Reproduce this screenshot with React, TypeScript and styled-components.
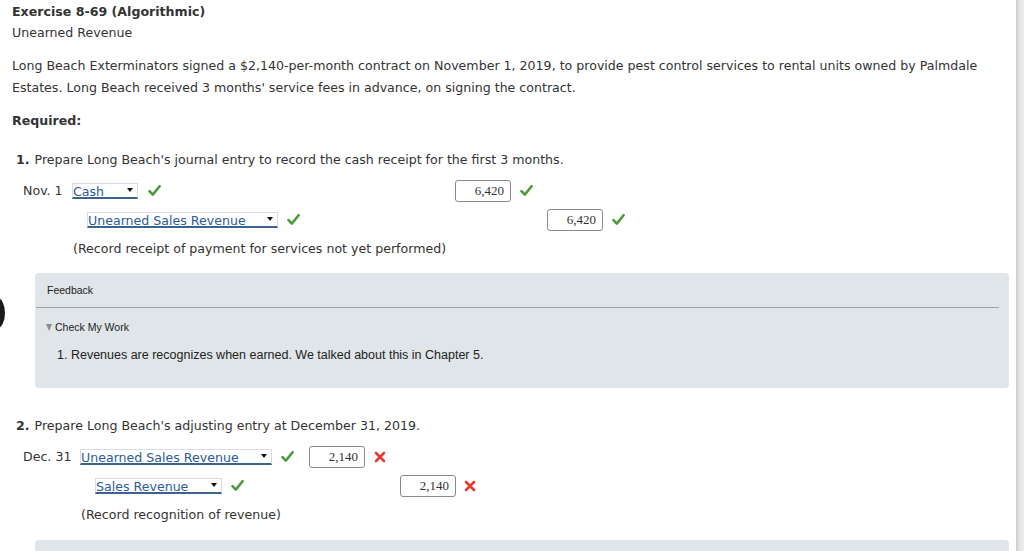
import React from "react";
import styled, { createGlobalStyle } from "styled-components";

const GlobalStyle = createGlobalStyle`
  html, body {
    margin: 0;
    padding: 0;
    background: #fff;
  }
  body {
    font-family: "DejaVu Sans", Verdana, sans-serif;
    color: #333;
    overflow: hidden;
  }
`;

const Page = styled.div`
  display: flex;
  width: 1024px;
  height: 551px;
  overflow: hidden;
  position: relative;
`;

const Main = styled.div`
  flex: 1;
  padding: 4px 0 0 12px;
  font-size: 12.6px;
`;

const Scroll = styled.div`
  width: 8px;
  background: linear-gradient(90deg, #c9c9c9 0%, #e4e4e4 40%, #ececec 100%);
`;

const Blob = styled.div`
  position: absolute;
  left: -10px;
  top: 298px;
  width: 15px;
  height: 30px;
  border-radius: 50%;
  background: #1a1a1a;
`;

const Title = styled.div`
  font-weight: bold;
  line-height: 16px;
  height: 16px;
`;

const Sub = styled.div`
  margin-top: 5px;
  line-height: 16px;
`;

const Para = styled.p`
  margin: 14px 0 0;
  line-height: 22px;
  padding-right: 30px;
`;

const Required = styled.div`
  margin-top: 14px;
  font-weight: bold;
  line-height: 16px;
`;

const Question = styled.div`
  margin-top: 23px;
  padding-left: 4px;
  line-height: 16px;
  b {
    margin-right: 5px;
  }
`;

const Entry = styled.div<{ indent: number }>`
  display: flex;
  align-items: center;
  height: 29px;
  padding-left: ${(p) => p.indent}px;
`;

const DateLabel = styled.span<{ w: number }>`
  width: ${(p) => p.w}px;
  flex-shrink: 0;
`;

const Select = styled.span<{ w: number }>`
  position: relative;
  display: inline-block;
  width: ${(p) => p.w}px;
  height: 16px;
  line-height: 15px;
  color: #2b5d98;
  border: 1px solid #d6dde6;
  border-bottom: 2px solid #3a6390;
  box-sizing: border-box;
  padding-left: 0;
  flex-shrink: 0;
  &::after {
    content: "";
    position: absolute;
    right: 4px;
    top: 4px;
    border-left: 3.5px solid transparent;
    border-right: 3.5px solid transparent;
    border-top: 4px solid #111;
  }
`;

const Mark = styled.span<{ gap: number }>`
  margin-left: ${(p) => p.gap}px;
  display: inline-flex;
  width: 13px;
  flex-shrink: 0;
`;

const Amount = styled.span<{ x: number }>`
  margin-left: ${(p) => p.x}px;
  width: 56px;
  height: 22px;
  box-sizing: border-box;
  border: 1px solid #8a8a8a;
  border-radius: 3px;
  font-family: "Liberation Serif", "Times New Roman", serif;
  font-size: 13px;
  text-align: right;
  padding-right: 6px;
  line-height: 20px;
  color: #333;
  flex-shrink: 0;
`;

const Note = styled.div<{ indent: number }>`
  padding-left: ${(p) => p.indent}px;
  line-height: 16px;
  margin-top: 7px;
`;

const Feedback = styled.div`
  margin: 16px 7px 0 23px;
  background: #dfe5e8;
  border-radius: 4px;
  height: 115px;
  padding: 0 10px 0 0;
  font-family: "Liberation Sans", Arial, sans-serif;
  color: #222;
`;

const FeedbackHead = styled.div`
  font-size: 10.5px;
  padding: 11px 0 0 11px;
  height: 23px;
  border-bottom: 1px solid #9aa0a4;
  margin-left: 1px;
`;

const CheckWork = styled.div`
  font-size: 10.5px;
  padding: 13px 0 0 11px;
  display: flex;
  align-items: center;
  gap: 1px;
  &::before {
    content: "";
    display: inline-block;
    border-left: 3.5px solid transparent;
    border-right: 3.5px solid transparent;
    border-top: 7px solid #8c8c8c;
    margin-right: 2px;
  }
`;

const FeedbackText = styled.div`
  font-size: 12.5px;
  padding: 15px 0 0 22px;
`;

const NextBox = styled.div`
  margin: 17px 7px 0 23px;
  background: #dfe5e8;
  border-radius: 4px;
  height: 40px;
`;

const Check = () => (
  <svg width="13" height="13" viewBox="0 0 13 13">
    <path
      d="M1.5 7.2 L4.8 10.6 L11.6 2.2"
      fill="none"
      stroke="#4c9a3c"
      strokeWidth="2.6"
      strokeLinecap="round"
      strokeLinejoin="round"
    />
  </svg>
);

const Cross = () => (
  <svg width="12" height="12" viewBox="0 0 12 12">
    <path
      d="M2 2 L10 10 M10 2 L2 10"
      fill="none"
      stroke="#e53a2e"
      strokeWidth="2.6"
      strokeLinecap="round"
    />
  </svg>
);

export default function App() {
  return (
    <>
      <GlobalStyle />
      <Page>
        <Blob />
        <Main>
          <Title>Exercise 8-69 (Algorithmic)</Title>
          <Sub>Unearned Revenue</Sub>
          <Para>
            Long Beach Exterminators signed a $2,140-per-month contract on
            November 1, 2019, to provide pest control services to rental units
            owned by Palmdale Estates. Long Beach received 3 months' service
            fees in advance, on signing the contract.
          </Para>
          <Required>Required:</Required>

          <Question>
            <b>1.</b>Prepare Long Beach's journal entry to record the cash
            receipt for the first 3 months.
          </Question>
          <Entry indent={11} style={{ marginTop: 8 }}>
            <DateLabel w={49}>Nov. 1</DateLabel>
            <Select w={66}>Cash</Select>
            <Mark gap={10}>
              <Check />
            </Mark>
            <Amount x={294}>6,420</Amount>
            <Mark gap={9}>
              <Check />
            </Mark>
          </Entry>
          <Entry indent={75}>
            <Select w={191}>Unearned Sales Revenue</Select>
            <Mark gap={9}>
              <Check />
            </Mark>
            <Amount x={247}>6,420</Amount>
            <Mark gap={9}>
              <Check />
            </Mark>
          </Entry>
          <Note indent={61}>
            (Record receipt of payment for services not yet performed)
          </Note>

          <Feedback>
            <FeedbackHead>Feedback</FeedbackHead>
            <CheckWork>Check My Work</CheckWork>
            <FeedbackText>
              1. Revenues are recognizes when earned. We talked about this in
              Chapter 5.
            </FeedbackText>
          </Feedback>

          <Question style={{ marginTop: 30 }}>
            <b>2.</b>Prepare Long Beach's adjusting entry at December 31, 2019.
          </Question>
          <Entry indent={11} style={{ marginTop: 8 }}>
            <DateLabel w={57}>Dec. 31</DateLabel>
            <Select w={192}>Unearned Sales Revenue</Select>
            <Mark gap={9}>
              <Check />
            </Mark>
            <Amount x={15}>2,140</Amount>
            <Mark gap={9}>
              <Cross />
            </Mark>
          </Entry>
          <Entry indent={83}>
            <Select w={127}>Sales Revenue</Select>
            <Mark gap={9}>
              <Check />
            </Mark>
            <Amount x={156}>2,140</Amount>
            <Mark gap={8}>
              <Cross />
            </Mark>
          </Entry>
          <Note indent={69}>(Record recognition of revenue)</Note>

          <NextBox />
        </Main>
        <Scroll />
      </Page>
    </>
  );
}
